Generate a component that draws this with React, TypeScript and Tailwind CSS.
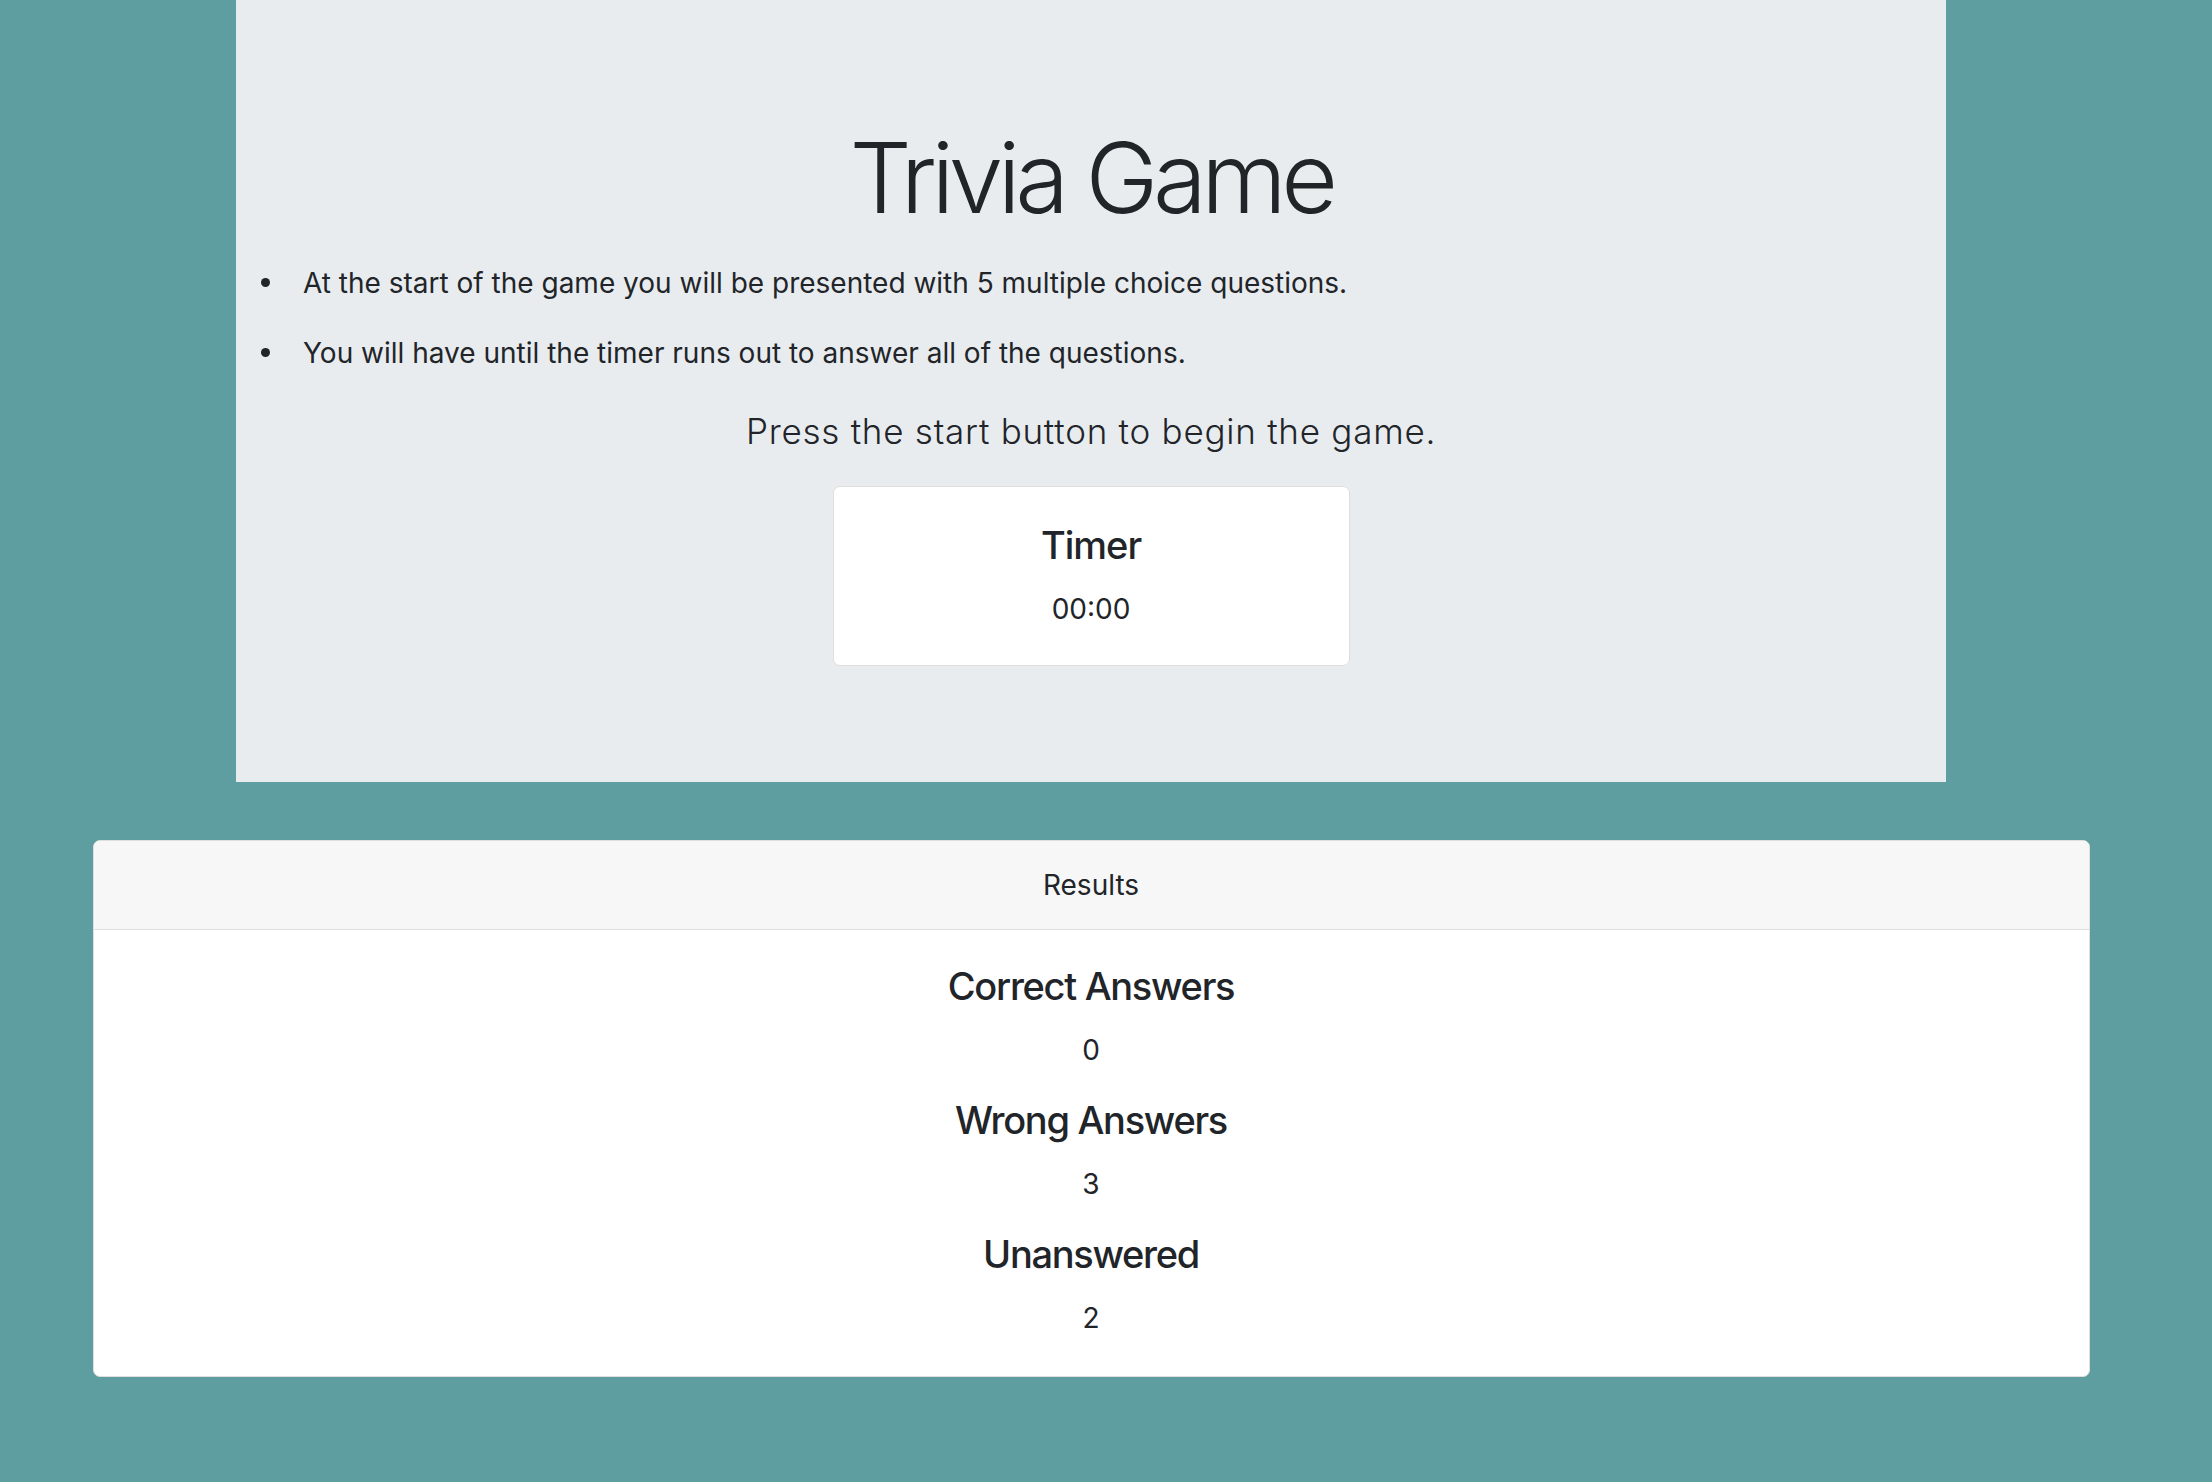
export default function App() {
  const results = [
    { label: "Correct Answers", value: 0 },
    { label: "Wrong Answers", value: 3 },
    { label: "Unanswered", value: 2 },
  ];

  const rules = [
    "At the start of the game you will be presented with 5 multiple choice questions.",
    "You will have until the timer runs out to answer all of the questions.",
  ];

  return (
    <div
      className="min-h-[1482px] w-full bg-[#5f9ea0] text-[#212529]"
      style={{ fontFamily: "Inter, 'Noto Sans', sans-serif" }}
    >
      <div className="w-[2182px] flex flex-col items-center">
        {/* jumbotron */}
        <div className="w-[1710px] h-[782px] bg-[#e9ecef] pt-[119px]">
          <h1 className="text-center text-[98px] leading-[117.6px] font-light tracking-[-5.5px]">
            Trivia Game
          </h1>
          <ul className="pl-[22px] mt-[25px] text-[28px] leading-[42px]">
            {rules.map((rule) => (
              <li key={rule} className="flex items-center mb-[28px]">
                <span className="w-[45px] flex items-center">
                  <span className="ml-[3px] w-[9px] h-[9px] rounded-full bg-[#212529]" />
                </span>
                <span>{rule}</span>
              </li>
            ))}
          </ul>
          <p className="pt-[3px] text-center text-[35px] leading-[52.5px] font-light tracking-[0.75px]">
            Press the start button to begin the game.
          </p>
          <div className="mx-auto mt-[29px] w-[517px] rounded-[7px] border border-[#dfdfdf] bg-white p-[35px] text-center">
            <h5 className="text-[38px] leading-[46px] font-medium tracking-[-1px] mb-[20px]">
              Timer
            </h5>
            <p className="text-[28px] leading-[42px]">00:00</p>
          </div>
        </div>

        {/* results card */}
        <div className="mt-[58px] w-[1997px] rounded-[7px] border border-[#dfdfdf] bg-white overflow-hidden">
          <div className="bg-[#f7f7f7] border-b border-[#dfdfdf] py-[23px] text-center text-[28px] leading-[42px]">
            Results
          </div>
          <div className="pt-[33px] pb-[37px] text-center">
            {results.map((r, i) => (
              <div key={r.label}>
                <h5 className="text-[38px] leading-[46px] font-medium tracking-[-1.3px] mb-[20px]">
                  {r.label}
                </h5>
                <p
                  className={
                    i < results.length - 1
                      ? "text-[28px] leading-[42px] mb-[26px]"
                      : "text-[28px] leading-[42px]"
                  }
                >
                  {r.value}
                </p>
              </div>
            ))}
          </div>
        </div>
      </div>
    </div>
  );
}
